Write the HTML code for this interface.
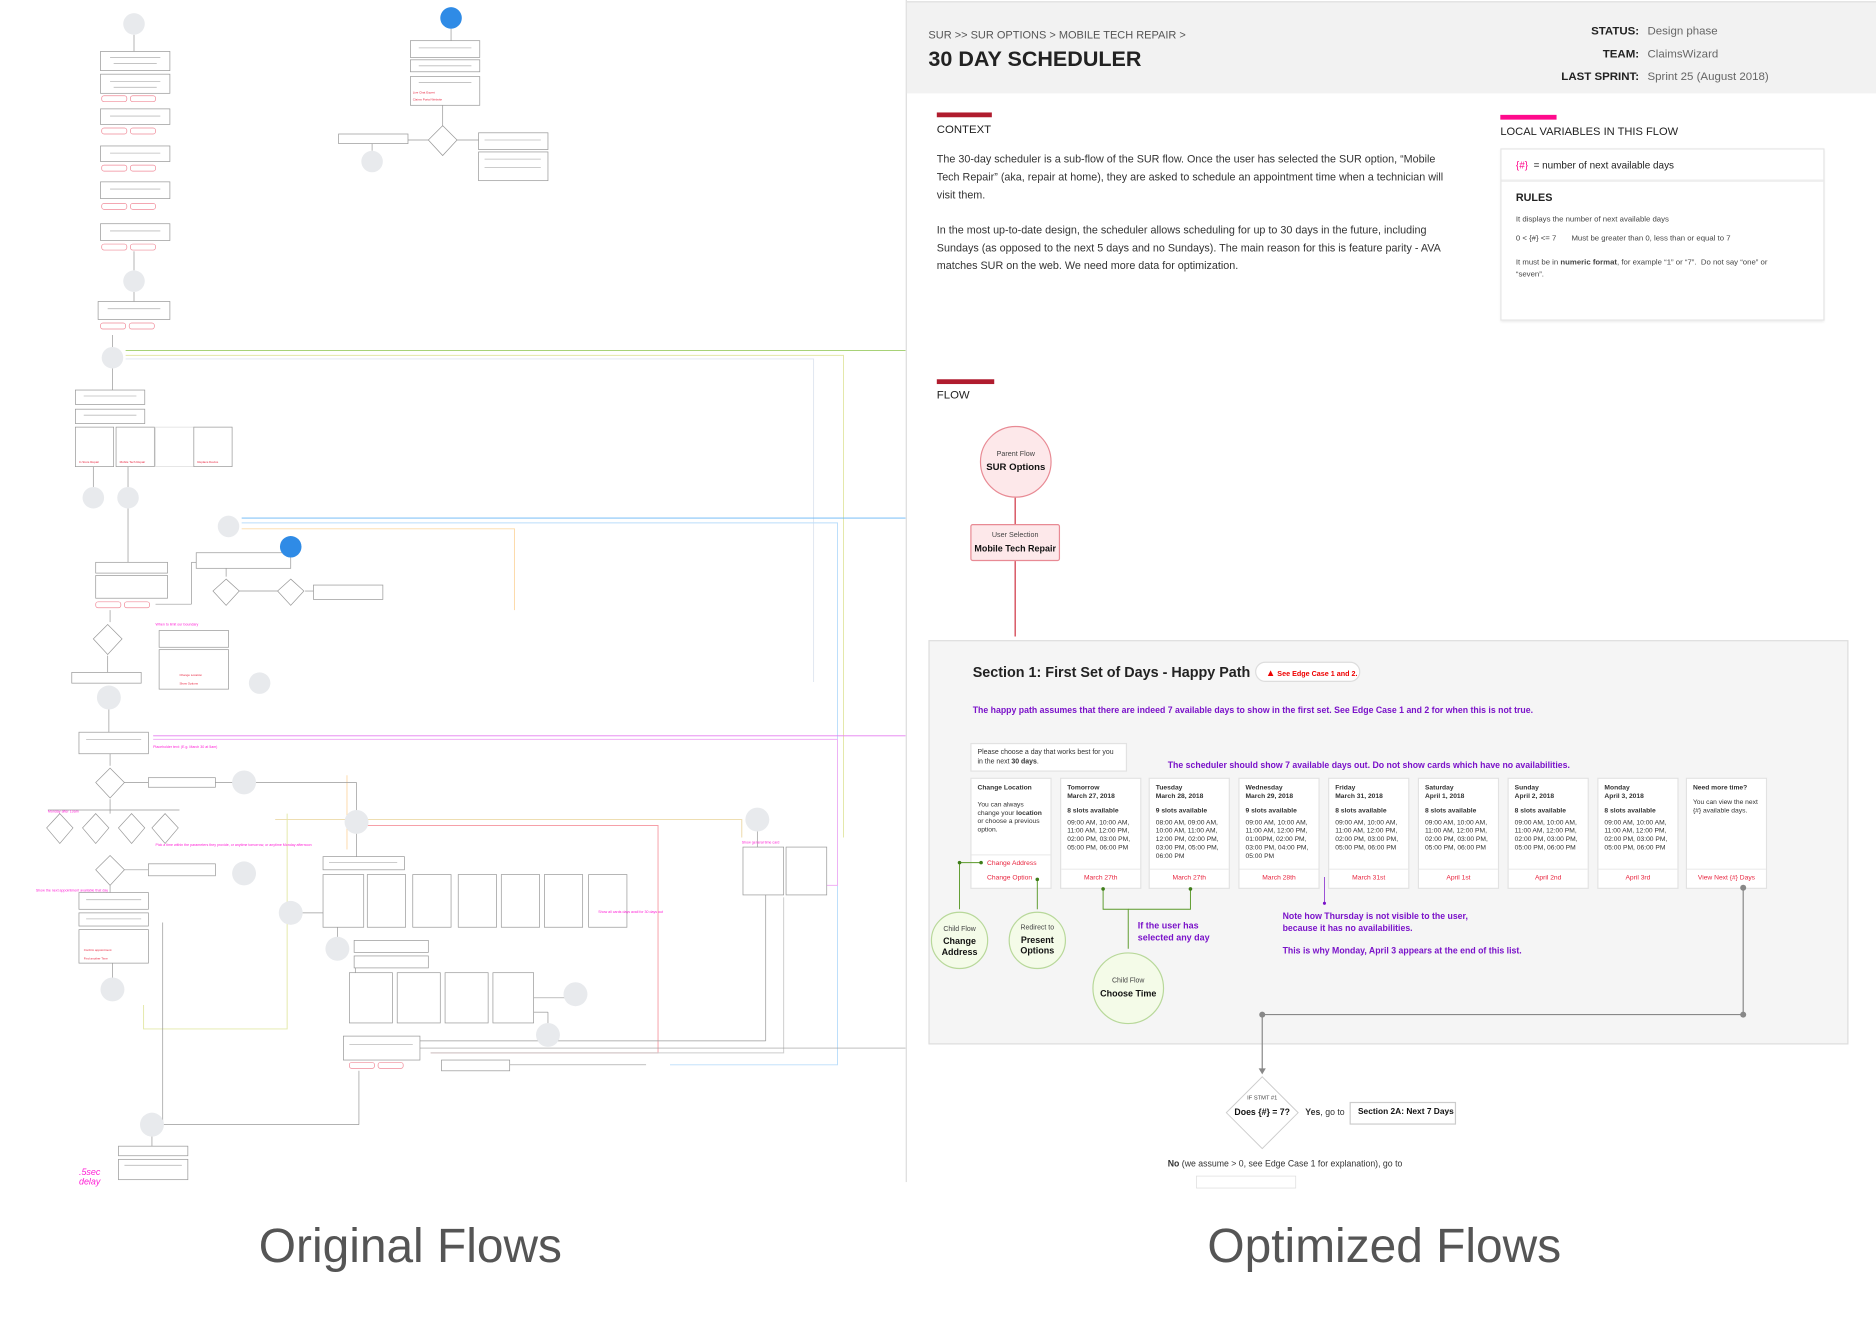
<!DOCTYPE html>
<html><head><meta charset="utf-8">
<style>
*{margin:0;padding:0;box-sizing:border-box}
html,body{width:1876px;height:1320px;overflow:hidden;background:#fff;font-family:"Liberation Sans",sans-serif}
#w{position:absolute;left:0;top:0;width:1568px;height:1104px;transform:scale(1.19643);transform-origin:0 0}
.a{position:absolute}
.t{position:absolute;white-space:nowrap}
.card{position:absolute;top:650px;width:68px;height:93px;background:#fff;border:1px solid #e2e2e2;font-size:5.6px;color:#333;line-height:7px}
.card .in{padding:5px 5px}
.card .sep{position:absolute;left:0;right:0;top:75px;border-top:1px solid #ececec}
.card .lk{position:absolute;left:0;right:0;top:80px;text-align:center;color:#e8253f}
.circ{position:absolute;border-radius:50%;text-align:center}
.pur{color:#7a12c9;font-weight:bold}
</style></head><body><div id="w">

<!-- LEFT ORIGINAL FLOWS -->
<svg class="a" style="left:0;top:0" width="757" height="1000" viewBox="0 0 757 1000">
<g fill="none" stroke-width="0.8">
<polyline points="105,293 757,293" stroke="#9ccc65"/>
<polyline points="105,297 705,297 705,700" stroke="#e3e8a8"/>
<polyline points="105,300 680,300 680,570" stroke="#dfe6f0"/>
<polyline points="202,433 757,433" stroke="#64b5f6"/>
<polyline points="202,437 700,437 700,890 560,890" stroke="#bbdefb"/>
<polyline points="202,442 430,442 430,510" stroke="#fcd9a8"/>
<polyline points="128,615 757,615" stroke="#e57df0"/>
<polyline points="128,618 700,618 700,740 690,740" stroke="#f0b0f5"/>
<polyline points="290,648 290,710" stroke="#fcd9a8"/>
<polyline points="230,685 620,685 620,700" stroke="#ecd9a8"/>
<polyline points="300,690 550,690 550,880 360,880" stroke="#f6a0a8"/>
<polyline points="240,680 240,860 120,860 120,840" stroke="#e3e8a8"/>
<polyline points="655,750 655,880 360,880" stroke="#ccc"/>
</g>
<g fill="none" stroke="#999" stroke-width="0.6">
<line x1="112" y1="29" x2="112" y2="43"/><line x1="112" y1="210" x2="112" y2="226"/><line x1="112" y1="244" x2="112" y2="252"/>
<line x1="94" y1="280" x2="94" y2="290"/><line x1="94" y1="308" x2="94" y2="326"/><line x1="78" y1="390" x2="78" y2="407"/>
<line x1="107" y1="390" x2="107" y2="407"/><line x1="107" y1="425" x2="107" y2="470"/><line x1="92" y1="510" x2="92" y2="520"/>
<line x1="90" y1="548" x2="90" y2="562"/><line x1="91" y1="592" x2="91" y2="612"/><line x1="92" y1="630" x2="92" y2="640"/>
<line x1="92" y1="668" x2="92" y2="680"/><line x1="92" y1="740" x2="92" y2="746"/><line x1="94" y1="805" x2="94" y2="818"/>
<line x1="104" y1="654" x2="124" y2="654"/><line x1="180" y1="654" x2="195" y2="654"/><line x1="104" y1="727" x2="124" y2="727"/>
<line x1="213" y1="654" x2="298" y2="654" /><line x1="298" y1="654" x2="298" y2="678"/><line x1="298" y1="696" x2="298" y2="716"/>
<line x1="200" y1="494" x2="232" y2="494"/><line x1="255" y1="494" x2="262" y2="494"/><line x1="189" y1="475" x2="189" y2="482"/>
<line x1="377" y1="24" x2="377" y2="34"/><line x1="370" y1="88" x2="370" y2="105"/><line x1="341" y1="117" x2="358" y2="117"/><line x1="382" y1="117" x2="400" y2="117"/>
<line x1="311" y1="120" x2="311" y2="126"/><line x1="127" y1="949" x2="127" y2="958"/><line x1="300" y1="895" x2="300" y2="940" /><line x1="300" y1="940" x2="136" y2="940"/>
<line x1="351" y1="876" x2="757" y2="876"/><line x1="426" y1="890" x2="540" y2="890"/>
<line x1="633" y1="694" x2="633" y2="708"/><line x1="640" y1="748" x2="640" y2="870" /><line x1="640" y1="870" x2="351" y2="870"/>
<line x1="446" y1="834" x2="472" y2="834"/><line x1="446" y1="846" x2="458" y2="846"/><line x1="458" y1="846" x2="458" y2="856"/>
<line x1="297" y1="808" x2="297" y2="813"/><line x1="282" y1="775" x2="282" y2="784"/><line x1="252" y1="763" x2="270" y2="763"/>
<line x1="136" y1="771" x2="136" y2="940"/><line x1="130" y1="505" x2="160" y2="505"/><line x1="160" y1="505" x2="160" y2="470"/><line x1="160" y1="470" x2="164" y2="470"/>
<line x1="40" y1="677" x2="150" y2="677"/>
</g>
<g fill="#fff" stroke="#999" stroke-width="0.6">
<rect x="84" y="43" width="58" height="16"/><rect x="84" y="62" width="58" height="16"/><rect x="84" y="91" width="58" height="13"/>
<rect x="84" y="122" width="58" height="13"/><rect x="84" y="152" width="58" height="14"/><rect x="84" y="187" width="58" height="14"/>
<rect x="82" y="252" width="60" height="15"/><rect x="63" y="326" width="58" height="12"/><rect x="63" y="342" width="58" height="12"/>
<rect x="63" y="357" width="32" height="33"/><rect x="97" y="357" width="32" height="33"/><rect x="130" y="357" width="32" height="33" stroke="#ddd"/><rect x="162" y="357" width="32" height="33"/>
<rect x="164" y="462" width="79" height="13"/><rect x="262" y="489" width="58" height="12"/>
<rect x="80" y="470" width="60" height="9"/><rect x="80" y="481" width="60" height="19"/>
<rect x="133" y="527" width="58" height="14"/><rect x="133" y="543" width="58" height="33"/>
<rect x="60" y="562" width="58" height="9"/><rect x="66" y="612" width="58" height="18"/>
<rect x="124" y="650" width="56" height="8"/><rect x="124" y="722" width="56" height="10"/>
<rect x="66" y="746" width="58" height="14"/><rect x="66" y="763" width="58" height="11"/><rect x="66" y="777" width="58" height="28"/>
<rect x="270" y="716" width="68" height="11"/>
<rect x="270" y="731" width="34" height="44"/><rect x="307" y="731" width="32" height="44"/><rect x="345" y="731" width="32" height="44"/><rect x="383" y="731" width="32" height="44"/><rect x="419" y="731" width="32" height="44"/><rect x="455" y="731" width="32" height="44"/><rect x="492" y="731" width="32" height="44"/>
<rect x="296" y="786" width="62" height="10"/><rect x="296" y="799" width="62" height="10"/>
<rect x="292" y="813" width="36" height="42"/><rect x="332" y="813" width="36" height="42"/><rect x="372" y="813" width="36" height="42"/><rect x="412" y="813" width="34" height="42"/>
<rect x="287" y="866" width="64" height="20"/><rect x="369" y="886" width="57" height="9"/>
<rect x="99" y="958" width="58" height="8"/><rect x="99" y="969" width="58" height="17"/>
<rect x="343" y="34" width="58" height="14"/><rect x="343" y="50" width="58" height="10"/><rect x="343" y="64" width="58" height="24"/>
<rect x="283" y="112" width="58" height="8"/><rect x="400" y="111" width="58" height="14"/><rect x="400" y="127" width="58" height="24"/>
<rect x="621" y="708" width="34" height="40"/><rect x="657" y="708" width="34" height="40"/>
<polygon points="189,484 200,494 189,506 178,494"/><polygon points="243,484 254,494 243,506 232,494"/>
<polygon points="90,522 102,534 90,547 78,534"/><polygon points="92,642 104,654 92,667 80,654"/>
<polygon points="50,680 61,692 50,705 39,692"/><polygon points="80,680 91,692 80,705 69,692"/><polygon points="110,680 121,692 110,705 99,692"/><polygon points="138,680 149,692 138,705 127,692"/>
<polygon points="92,715 104,727 92,740 80,727"/><polygon points="370,105 382,117 370,130 358,117"/>
</g>
<g stroke="#bbb" stroke-width="0.7">
<line x1="92" y1="48" x2="134" y2="48"/><line x1="95" y1="53" x2="131" y2="53"/><line x1="92" y1="68" x2="134" y2="68"/><line x1="95" y1="73" x2="131" y2="73"/>
<line x1="92" y1="97" x2="134" y2="97"/><line x1="92" y1="128" x2="134" y2="128"/><line x1="92" y1="158" x2="134" y2="158"/><line x1="92" y1="193" x2="134" y2="193"/>
<line x1="90" y1="258" x2="134" y2="258"/><line x1="70" y1="331" x2="114" y2="331"/><line x1="70" y1="347" x2="114" y2="347"/>
<line x1="350" y1="40" x2="394" y2="40"/><line x1="350" y1="55" x2="394" y2="55"/><line x1="350" y1="69" x2="394" y2="69"/>
<line x1="405" y1="117" x2="452" y2="117"/><line x1="405" y1="133" x2="452" y2="133"/><line x1="405" y1="140" x2="452" y2="140"/>
<line x1="72" y1="618" x2="118" y2="618"/><line x1="72" y1="752" x2="118" y2="752"/><line x1="72" y1="768" x2="118" y2="768"/>
<line x1="275" y1="721" x2="332" y2="721"/><line x1="292" y1="873" x2="345" y2="873"/><line x1="104" y1="974" x2="152" y2="974"/>
</g>
<g fill="#fff" stroke="#f08a98" stroke-width="0.6">
<rect x="85" y="80" width="21" height="5" rx="2"/><rect x="109" y="80" width="21" height="5" rx="2"/>
<rect x="85" y="107" width="21" height="5" rx="2"/><rect x="109" y="107" width="21" height="5" rx="2"/>
<rect x="85" y="138" width="21" height="5" rx="2"/><rect x="109" y="138" width="21" height="5" rx="2"/>
<rect x="85" y="170" width="21" height="5" rx="2"/><rect x="109" y="170" width="21" height="5" rx="2"/>
<rect x="85" y="204" width="21" height="5" rx="2"/><rect x="109" y="204" width="21" height="5" rx="2"/>
<rect x="84" y="270" width="21" height="5" rx="2"/><rect x="108" y="270" width="21" height="5" rx="2"/>
<rect x="80" y="503" width="21" height="5" rx="2"/><rect x="104" y="503" width="21" height="5" rx="2"/>
<rect x="292" y="888" width="21" height="5" rx="2"/><rect x="316" y="888" width="21" height="5" rx="2"/>
</g>
<g fill="#e8eaed">
<circle cx="112" cy="20" r="9"/><circle cx="112" cy="235" r="9"/><circle cx="94" cy="299" r="9"/>
<circle cx="78" cy="416" r="9"/><circle cx="107" cy="416" r="9"/><circle cx="191" cy="440" r="9"/>
<circle cx="217" cy="571" r="9"/><circle cx="91" cy="583" r="10"/><circle cx="204" cy="654" r="10"/><circle cx="204" cy="730" r="10"/>
<circle cx="94" cy="827" r="10"/><circle cx="298" cy="687" r="10"/><circle cx="243" cy="763" r="10"/><circle cx="282" cy="793" r="10"/>
<circle cx="481" cy="831" r="10"/><circle cx="458" cy="865" r="10"/><circle cx="127" cy="940" r="10"/><circle cx="311" cy="135" r="9"/><circle cx="633" cy="685" r="10"/>
</g>
<g fill="#2f8be6"><circle cx="377" cy="15" r="9"/><circle cx="243" cy="457" r="9"/></g>
<g fill="#e8253f" font-size="2.5" font-family="Liberation Sans">
<text x="345" y="78">Live Chat Expert</text><text x="345" y="84">Claims Portal Website</text>
<text x="66" y="387">In Store Repair</text><text x="100" y="387">Mobile Tech Repair</text><text x="165" y="387">Replace Device</text>
<text x="150" y="565">Change Location</text><text x="150" y="572">Show Options</text>
<text x="70" y="795">Confirm appointment</text><text x="70" y="802">Find another Time</text>
</g>
<g fill="#ff1fd6" font-size="3" font-family="Liberation Sans">
<text x="130" y="523">When to limit our boundary</text><text x="128" y="625">Placeholder text: (E.g. March 30 at 5am)</text>
<text x="30" y="745">Show the next appointment available that day</text><text x="130" y="707">Pick a time within the parameters they provide, or anytime tomorrow, or anytime Monday afternoon</text>
<text x="620" y="705">Show general time card</text><text x="500" y="763">Show all cards days avail for 30 days out</text>
<text x="40" y="679">Monday after 10am</text>
</g>
<text x="66" y="982" fill="#ff1fd6" font-size="7.5" font-style="italic" font-family="Liberation Sans">.5sec</text>
<text x="66" y="990" fill="#ff1fd6" font-size="7.5" font-style="italic" font-family="Liberation Sans">delay</text>
</svg>

<!-- RIGHT PANEL -->
<div class="a" style="left:757px;top:0;width:1px;height:988px;background:#ddd"></div>
<div class="a" style="left:758px;top:1px;width:810px;height:77px;background:#f2f2f2;border-top:1px solid #e0e0e0"></div>
<div class="t" style="left:776px;top:24px;font-size:9.2px;color:#555">SUR &gt;&gt; SUR OPTIONS &gt; MOBILE TECH REPAIR &gt;</div>
<div class="t" style="left:776px;top:39px;font-size:18px;font-weight:bold;color:#222">30 DAY SCHEDULER</div>
<div class="t" style="left:1250px;top:17px;width:120px;text-align:right;font-size:9.6px;color:#222;font-weight:bold;line-height:19px">STATUS:<br>TEAM:<br>LAST SPRINT:</div>
<div class="t" style="left:1377px;top:17px;font-size:9.6px;color:#666;line-height:19px">Design phase<br>ClaimsWizard<br>Sprint 25 (August 2018)</div>

<div class="a" style="left:783px;top:94px;width:46px;height:4px;background:#b01c2e"></div>
<div class="t" style="left:783px;top:103px;font-size:9.5px;color:#222">CONTEXT</div>
<div class="a" style="left:783px;top:126px;width:430px;font-size:9px;color:#333;line-height:14.8px">The 30-day scheduler is a sub-flow of the SUR flow. Once the user has selected the SUR option, “Mobile Tech Repair” (aka, repair at home), they are asked to schedule an appointment time when a technician will visit them.<br><br>In the most up-to-date design, the scheduler allows scheduling for up to 30 days in the future, including Sundays (as opposed to the next 5 days and no Sundays). The main reason for this is feature parity - AVA matches SUR on the web. We need more data for optimization.</div>

<div class="a" style="left:1254px;top:96px;width:47px;height:4px;background:#ff0a8c"></div>
<div class="t" style="left:1254px;top:105px;font-size:9.3px;color:#222">LOCAL VARIABLES IN THIS FLOW</div>
<div class="a" style="left:1254px;top:124px;width:271px;height:144px;background:#fff;border:1px solid #e5e5e5;box-shadow:0 1px 2px rgba(0,0,0,.08)">
 <div class="t" style="left:12px;top:8px;font-size:8.3px;color:#222"><span style="color:#ff0a8c">{#}</span> &nbsp;= number of next available days</div>
 <div class="a" style="left:0;right:0;top:25px;border-top:2px solid #eee"></div>
 <div class="t" style="left:12px;top:35px;font-size:9px;font-weight:bold;color:#222">RULES</div>
 <div class="t" style="left:12px;top:55px;font-size:6.5px;color:#444">It displays the number of next available days</div>
 <div class="t" style="left:12px;top:71px;font-size:6.5px;color:#444">0 &lt; {#} &lt;= 7 &nbsp;&nbsp;&nbsp;&nbsp;&nbsp; Must be greater than 0, less than or equal to 7</div>
 <div class="a" style="left:12px;top:90px;width:228px;font-size:6.5px;color:#444;line-height:10px">It must be in <b>numeric format</b>, for example “1” or “7”. &nbsp;Do not say “one” or “seven”.</div>
</div>

<div class="a" style="left:783px;top:317px;width:48px;height:4px;background:#b01c2e"></div>
<div class="t" style="left:783px;top:325px;font-size:9.5px;color:#222">FLOW</div>

<div class="circ" style="left:819px;top:356px;width:60px;height:60px;background:#fde8ea;border:1px solid #e88a94">
 <div style="font-size:6px;color:#444;margin-top:20px">Parent Flow</div><div style="font-size:8px;font-weight:bold;color:#111;margin-top:3px">SUR Options</div></div>
<div class="a" style="left:848px;top:416px;width:1px;height:22px;background:#d03040"></div>
<div class="a" style="left:811px;top:438px;width:75px;height:31px;background:#fde8ea;border:1px solid #e88a94;border-radius:2px;text-align:center">
 <div style="font-size:6px;color:#444;margin-top:6px">User Selection</div><div style="font-size:7.5px;font-weight:bold;color:#111;margin-top:3px">Mobile Tech Repair</div></div>
<div class="a" style="left:848px;top:469px;width:1px;height:63px;background:#d03040"></div>

<div class="a" style="left:776px;top:535px;width:769px;height:338px;background:#f5f5f5;border:1px solid #ddd"></div>
<div class="t" style="left:813px;top:555px;font-size:12px;font-weight:bold;color:#222">Section 1: First Set of Days - Happy Path</div>
<div class="a" style="left:1049px;top:553px;width:88px;height:17px;background:#fff;border:1px solid #ddd;border-radius:9px;font-size:6px;color:#e00;font-weight:bold;padding:4px 0 0 8px;white-space:nowrap"><span style="font-size:8px">▲</span> See Edge Case 1 and 2.</div>
<div class="t pur" style="left:813px;top:589px;font-size:7.3px">The happy path assumes that there are indeed 7 available days to show in the first set. See Edge Case 1 and 2 for when this is not true.</div>
<div class="a" style="left:811px;top:621px;width:131px;height:24px;background:#fff;border:1px solid #e2e2e2;font-size:5.8px;color:#333;line-height:7.5px;padding:4px 5px">Please choose a day that works best for you in the next <b>30 days</b>.</div>
<div class="t pur" style="left:976px;top:635px;font-size:7.3px">The scheduler should show 7 available days out. Do not show cards which have no availabilities.</div>

<div class="card" style="left:811px"><div class="in"><b>Change Location</b><br><br>You can always change your <b>location</b> or choose a previous option.</div><div class="sep" style="top:63px"></div>
 <div class="t" style="left:13px;top:68px;color:#e8253f">Change Address</div><div class="t" style="left:13px;top:80px;color:#e8253f">Change Option</div></div>
<div class="card" style="left:886px"><div class="in"><b>Tomorrow<br>March 27, 2018</b><br><div style="height:5px"></div><b>8 slots available</b><br><div style="height:3px"></div>09:00 AM, 10:00 AM, 11:00 AM, 12:00 PM, 02:00 PM, 03:00 PM, 05:00 PM, 06:00 PM</div><div class="sep"></div><div class="lk">March 27th</div></div>
<div class="card" style="left:960px"><div class="in"><b>Tuesday<br>March 28, 2018</b><br><div style="height:5px"></div><b>9 slots available</b><br><div style="height:3px"></div>08:00 AM, 09:00 AM, 10:00 AM, 11:00 AM, 12:00 PM, 02:00 PM, 03:00 PM, 05:00 PM, 06:00 PM</div><div class="sep"></div><div class="lk">March 27th</div></div>
<div class="card" style="left:1035px"><div class="in"><b>Wednesday<br>March 29, 2018</b><br><div style="height:5px"></div><b>9 slots available</b><br><div style="height:3px"></div>09:00 AM, 10:00 AM, 11:00 AM, 12:00 PM, 01:00PM, 02:00 PM, 03:00 PM, 04:00 PM, 05:00 PM</div><div class="sep"></div><div class="lk">March 28th</div></div>
<div class="card" style="left:1110px"><div class="in"><b>Friday<br>March 31, 2018</b><br><div style="height:5px"></div><b>8 slots available</b><br><div style="height:3px"></div>09:00 AM, 10:00 AM, 11:00 AM, 12:00 PM, 02:00 PM, 03:00 PM, 05:00 PM, 06:00 PM</div><div class="sep"></div><div class="lk">March 31st</div></div>
<div class="card" style="left:1185px"><div class="in"><b>Saturday<br>April 1, 2018</b><br><div style="height:5px"></div><b>8 slots available</b><br><div style="height:3px"></div>09:00 AM, 10:00 AM, 11:00 AM, 12:00 PM, 02:00 PM, 03:00 PM, 05:00 PM, 06:00 PM</div><div class="sep"></div><div class="lk">April 1st</div></div>
<div class="card" style="left:1260px"><div class="in"><b>Sunday<br>April 2, 2018</b><br><div style="height:5px"></div><b>8 slots available</b><br><div style="height:3px"></div>09:00 AM, 10:00 AM, 11:00 AM, 12:00 PM, 02:00 PM, 03:00 PM, 05:00 PM, 06:00 PM</div><div class="sep"></div><div class="lk">April 2nd</div></div>
<div class="card" style="left:1335px"><div class="in"><b>Monday<br>April 3, 2018</b><br><div style="height:5px"></div><b>8 slots available</b><br><div style="height:3px"></div>09:00 AM, 10:00 AM, 11:00 AM, 12:00 PM, 02:00 PM, 03:00 PM, 05:00 PM, 06:00 PM</div><div class="sep"></div><div class="lk">April 3rd</div></div>
<div class="card" style="left:1409px"><div class="in"><b>Need more time?</b><br><div style="height:5px"></div>You can view the next {#} available days.</div><div class="sep"></div><div class="lk">View Next {#} Days</div></div>

<svg class="a" style="left:760px;top:700px" width="800" height="300" viewBox="760 700 800 300">
<g fill="none" stroke="#5b9a2a" stroke-width="0.8">
<polyline points="820,721 802,721 802,760"/><polyline points="867,735 867,760"/>
<polyline points="922,743 922,760 943,760 943,793"/><polyline points="995,743 995,760 943,760"/>
</g>
<g fill="#3f7d1a"><circle cx="820" cy="721" r="1.5"/><circle cx="802" cy="721" r="1.5"/><circle cx="867" cy="735" r="1.5"/><circle cx="922" cy="743" r="1.5"/><circle cx="995" cy="743" r="1.5"/></g>
<line x1="1107" y1="733" x2="1107" y2="755" stroke="#7a12c9" stroke-width="0.6"/><circle cx="1107" cy="755" r="1.3" fill="#7a12c9"/>
<g fill="none" stroke="#888" stroke-width="1"><polyline points="1457,742 1457,848 1055,848 1055,895"/></g>
<g fill="#888"><circle cx="1457" cy="742" r="2.5"/><circle cx="1457" cy="848" r="2.5"/><circle cx="1055" cy="848" r="2.5"/><polygon points="1052,893 1058,893 1055,898"/></g>
<polygon points="1055,900 1085,930 1055,960 1025,930" fill="#fff" stroke="#ccc" stroke-width="0.8"/>
<rect x="1000" y="983" width="83" height="10" fill="#fff" stroke="#ddd" stroke-width="0.6"/>
</svg>
<div class="circ" style="left:778px;top:762px;width:48px;height:48px;background:#f4fbe8;border:1px solid #b8d89a"><div style="font-size:5.8px;color:#444;margin-top:11px">Child Flow</div><div style="font-size:7.5px;font-weight:bold;color:#111;line-height:9px;margin-top:2px">Change<br>Address</div></div>
<div class="circ" style="left:843px;top:762px;width:48px;height:48px;background:#f4fbe8;border:1px solid #b8d89a"><div style="font-size:5.8px;color:#444;margin-top:10px">Redirect to</div><div style="font-size:7.5px;font-weight:bold;color:#111;line-height:9px;margin-top:2px">Present<br>Options</div></div>
<div class="circ" style="left:913px;top:796px;width:60px;height:60px;background:#f4fbe8;border:1px solid #b8d89a"><div style="font-size:5.8px;color:#444;margin-top:20px">Child Flow</div><div style="font-size:7.5px;font-weight:bold;color:#111;margin-top:3px">Choose Time</div></div>
<div class="t pur" style="left:951px;top:769px;font-size:7.5px;line-height:10px">If the user has<br>selected any day</div>
<div class="t pur" style="left:1072px;top:761px;font-size:7.3px;line-height:9.5px">Note how Thursday is not visible to the user,<br>because it has no availabilities.<br><br>This is why Monday, April 3 appears at the end of this list.</div>
<div class="t" style="left:1025px;top:916px;width:60px;text-align:center;font-size:4.8px;color:#444">IF STMT #1</div>
<div class="t" style="left:1025px;top:925px;width:60px;text-align:center;font-size:7.3px;font-weight:bold;color:#111">Does {#} = 7?</div>
<div class="t" style="left:1091px;top:925px;font-size:7.3px;color:#333"><b>Yes</b>, go to</div>
<div class="a" style="left:1128px;top:921px;width:89px;height:19px;background:#fff;border:1px solid #ccc;font-size:7px;font-weight:bold;color:#111;padding:4px 0 0 6px;white-space:nowrap">Section 2A: Next 7 Days</div>
<div class="t" style="left:976px;top:968px;font-size:7.3px;color:#333"><b>No</b> (we assume &gt; 0, see Edge Case 1 for explanation), go to</div>

<div class="t" style="left:0;width:686px;top:1020px;text-align:center;font-size:40px;color:#555;font-weight:normal">Original Flows</div>
<div class="t" style="left:757px;width:800px;top:1020px;text-align:center;font-size:40px;color:#555;font-weight:normal">Optimized Flows</div>
</div></body></html>
